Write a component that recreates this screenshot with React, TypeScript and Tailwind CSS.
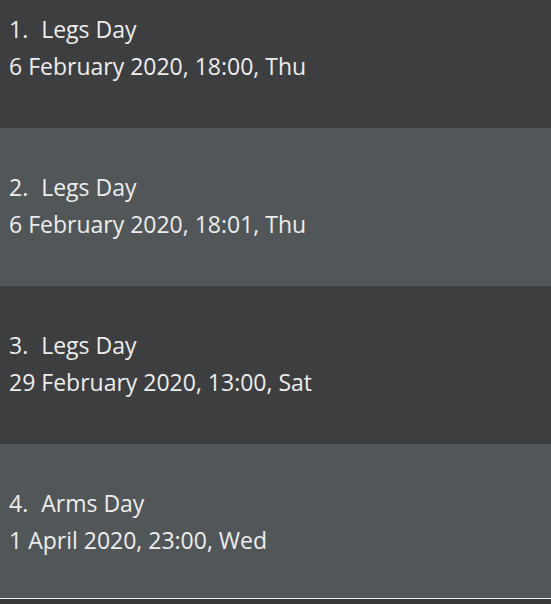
import React from 'react';

interface Session {
  title: string;
  when: string;
}

const SESSIONS: Session[] = [
  { title: 'Legs Day', when: '6 February 2020, 18:00, Thu' },
  { title: 'Legs Day', when: '6 February 2020, 18:01, Thu' },
  { title: 'Legs Day', when: '29 February 2020, 13:00, Sat' },
  { title: 'Arms Day', when: '1 April 2020, 23:00, Wed' },
];

const App: React.FC = () => {
  return (
    <div
      className="w-[551px] h-[604px] flex flex-col bg-[#383838] text-[#ededed] overflow-hidden"
      style={{ fontFamily: '"Open Sans", "Noto Sans", sans-serif' }}
    >
      {/* list viewport, scrolled down a bit */}
      <div className="h-[598px] overflow-hidden">
        <div className="-mt-[30px] flex flex-col">
          {SESSIONS.map((s, i) => (
            <div
              key={i}
              className={`h-[158px] shrink-0 pl-[9px] pt-[41px] text-[23px] font-medium leading-[37px] ${
                i % 2 === 0 ? 'bg-[#3d3e40]' : 'bg-[#515658]'
              }`}
            >
              <div className="flex gap-[13px]">
                <span>{i + 1}.</span>
                <span>{s.title}</span>
              </div>
              <div>{s.when}</div>
            </div>
          ))}
        </div>
      </div>
      <div className="h-px bg-[#f0f0f0]" />
    </div>
  );
};

export default App;
